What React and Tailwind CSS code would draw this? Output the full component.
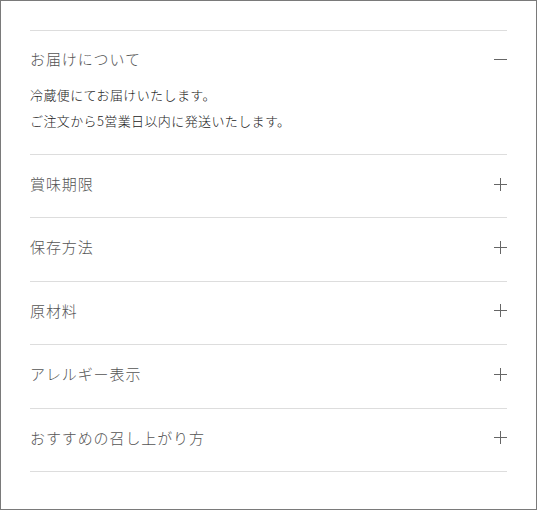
import React, { useState } from 'react';

const items = [
  {
    title: 'お届けについて',
    body: ['冷蔵便にてお届けいたします。', 'ご注文から5営業日以内に発送いたします。'],
  },
  { title: '賞味期限', body: [] },
  { title: '保存方法', body: [] },
  { title: '原材料', body: [] },
  { title: 'アレルギー表示', body: [] },
  { title: 'おすすめの召し上がり方', body: [] },
];

const Toggle = ({ open }) => (
  <span className="relative block w-[13px] h-[13px] flex-shrink-0">
    <span className="absolute left-0 top-[6px] w-[13px] h-px bg-[#666]"></span>
    {!open && <span className="absolute top-0 left-[6px] w-px h-[13px] bg-[#666]"></span>}
  </span>
);

export default function App() {
  const [openIndex, setOpenIndex] = useState(0);

  return (
    <div
      className="w-[537px] h-[510px] border border-[#7a7a7a] bg-white px-[29px] pt-[29px]"
      style={{ fontFamily: '"Noto Sans CJK JP", "Noto Sans", sans-serif' }}
    >
      <div className="border-t border-[#dddddd]">
        {items.map((item, index) => {
          const open = openIndex === index;
          return (
            <div key={index} className="border-b border-[#dddddd]">
              <button
                onClick={() => setOpenIndex(open ? -1 : index)}
                className={`w-full flex items-center justify-between text-left ${open ? 'h-[51px] pt-[5px]' : 'h-[62.4px] pb-[4px]'}`}
              >
                <span className="text-[15px] tracking-[0.06em] text-[#555] font-light">{item.title}</span>
                <Toggle open={open} />
              </button>
              {open && (
                <div className="pb-[20px]">
                  {item.body.map((line, i) => (
                    <p key={i} className="text-[13px] leading-[26px] tracking-[0.03em] text-[#222] font-light">
                      {line}
                    </p>
                  ))}
                </div>
              )}
            </div>
          );
        })}
      </div>
    </div>
  );
}
